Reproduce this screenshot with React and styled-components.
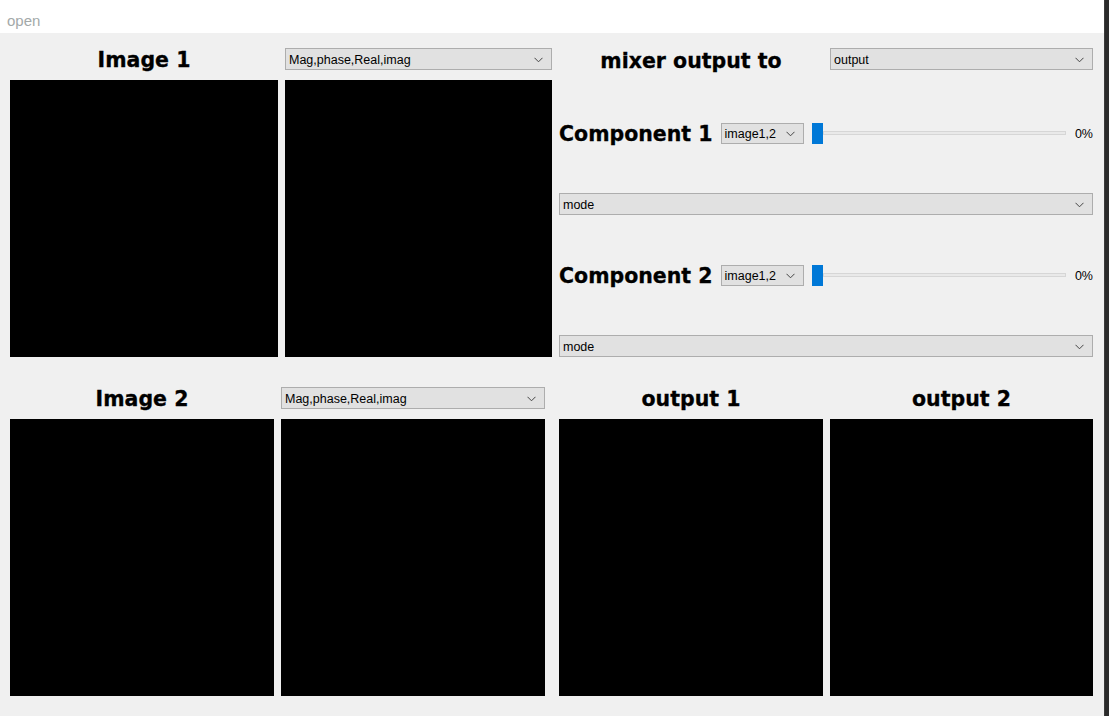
import React from "react";
import styled, { createGlobalStyle } from "styled-components";

const GlobalStyle = createGlobalStyle`
  html, body {
    margin: 0;
    padding: 0;
    background: #f0f0f0;
  }
  body {
    font-family: "Liberation Sans", Arial, sans-serif;
  }
`;

const Screen = styled.div`
  display: flex;
  width: 1109px;
  height: 716px;
  overflow: hidden;
`;

const Window = styled.div`
  width: 1104px;
  display: flex;
  flex-direction: column;
  background: #f0f0f0;
`;

const EdgeStrip = styled.div`
  width: 5px;
  background: #2b2b2b;
  border-left: 1px solid #3c3c3c;
  box-sizing: border-box;
`;

const MenuBar = styled.div`
  height: 33px;
  background: #ffffff;
  display: flex;
  align-items: flex-end;
  padding: 0 0 4px 7px;
  box-sizing: border-box;
`;

const MenuItem = styled.span`
  font-size: 15px;
  color: #a3a9a9;
  line-height: 17px;
`;

const Body = styled.div`
  flex: 1;
  padding: 15px 11px 0 10px;
  display: flex;
  flex-direction: column;
`;

const Section = styled.div`
  display: flex;
  gap: ${(p) => p.$gap}px;
  margin-top: ${(p) => p.$top || 0}px;
`;

const ImagePanel = styled.div`
  display: grid;
  grid-template-columns: ${(p) => p.$cols};
  grid-template-rows: 22px 277px;
  column-gap: 7px;
  row-gap: 10px;
`;

const Title = styled.div`
  font-family: "DejaVu Sans", sans-serif;
  font-weight: bold;
  font-size: 20.5px;
  color: #000;
  display: flex;
  align-items: center;
  justify-content: ${(p) => (p.$left ? "flex-start" : "center")};
  white-space: nowrap;
  line-height: 22px;
  padding-top: 2px;
  -webkit-text-stroke: 0.3px #000;
`;

const Canvas = styled.div`
  background: #000;
`;

const Combo = styled.div`
  height: ${(p) => p.$h || 22}px;
  width: ${(p) => (p.$w ? `${p.$w}px` : "auto")};
  box-sizing: border-box;
  border: 1px solid #adadad;
  background: #e1e1e1;
  display: flex;
  align-items: center;
  justify-content: space-between;
  padding: 1px 8px 0 3px;
  font-size: 12.5px;
  color: #000;
  flex-shrink: 0;
`;

const Chevron = () => (
  <svg width="9" height="6" viewBox="0 0 9 6">
    <path d="M0.5 0.8 L4.5 4.8 L8.5 0.8" fill="none" stroke="#444" strokeWidth="1" />
  </svg>
);

const Select = ({ children, w, h }) => (
  <Combo $w={w} $h={h}>
    <span>{children}</span>
    <Chevron />
  </Combo>
);

const MixerPanel = styled.div`
  width: 534px;
  display: flex;
  flex-direction: column;
`;

const MixerHeader = styled.div`
  display: grid;
  grid-template-columns: 264px 263px;
  column-gap: 7px;
  height: 22px;
  margin-bottom: 51px;
`;

const ComponentRow = styled.div`
  display: flex;
  align-items: center;
  height: 24px;
  gap: 8px;
  margin-bottom: 48px;
`;

const ModeBlock = styled.div`
  margin-bottom: ${(p) => (p.$last ? 0 : 48)}px;
`;

const Slider = styled.div`
  flex: 1;
  display: flex;
  align-items: center;
  height: 22px;
`;

const Handle = styled.div`
  width: 11px;
  height: 21px;
  background: #0078d7;
  flex-shrink: 0;
`;

const Groove = styled.div`
  flex: 1;
  height: 4px;
  box-sizing: border-box;
  border: 1px solid #d6d6d6;
  background: #e9e9e9;
`;

const Percent = styled.span`
  font-size: 12.5px;
  width: 19px;
  text-align: right;
  color: #000;
  padding-top: 2px;
`;

const MixComponent = ({ label }) => (
  <ComponentRow>
    <Title $left>{label}</Title>
    <Select w={83} h={21}>image1,2</Select>
    <Slider>
      <Handle />
      <Groove />
    </Slider>
    <Percent>0%</Percent>
  </ComponentRow>
);

export default function App() {
  return (
    <>
      <GlobalStyle />
      <Screen>
        <Window>
          <MenuBar>
            <MenuItem>open</MenuItem>
          </MenuBar>
          <Body>
            <Section $gap={7}>
              <ImagePanel $cols="268px 267px">
                <Title>Image 1</Title>
                <Select>Mag,phase,Real,imag</Select>
                <Canvas />
                <Canvas />
              </ImagePanel>
              <MixerPanel>
                <MixerHeader>
                  <Title>mixer output to</Title>
                  <Select>output</Select>
                </MixerHeader>
                <MixComponent label="Component 1" />
                <ModeBlock>
                  <Select>mode</Select>
                </ModeBlock>
                <MixComponent label="Component 2" />
                <ModeBlock $last>
                  <Select>mode</Select>
                </ModeBlock>
              </MixerPanel>
            </Section>
            <Section $gap={14} $top={30}>
              <ImagePanel $cols="264px 264px">
                <Title>Image 2</Title>
                <Select>Mag,phase,Real,imag</Select>
                <Canvas />
                <Canvas />
              </ImagePanel>
              <ImagePanel $cols="264px 263px">
                <Title>output 1</Title>
                <Title>output 2</Title>
                <Canvas />
                <Canvas />
              </ImagePanel>
            </Section>
          </Body>
        </Window>
        <EdgeStrip />
      </Screen>
    </>
  );
}
